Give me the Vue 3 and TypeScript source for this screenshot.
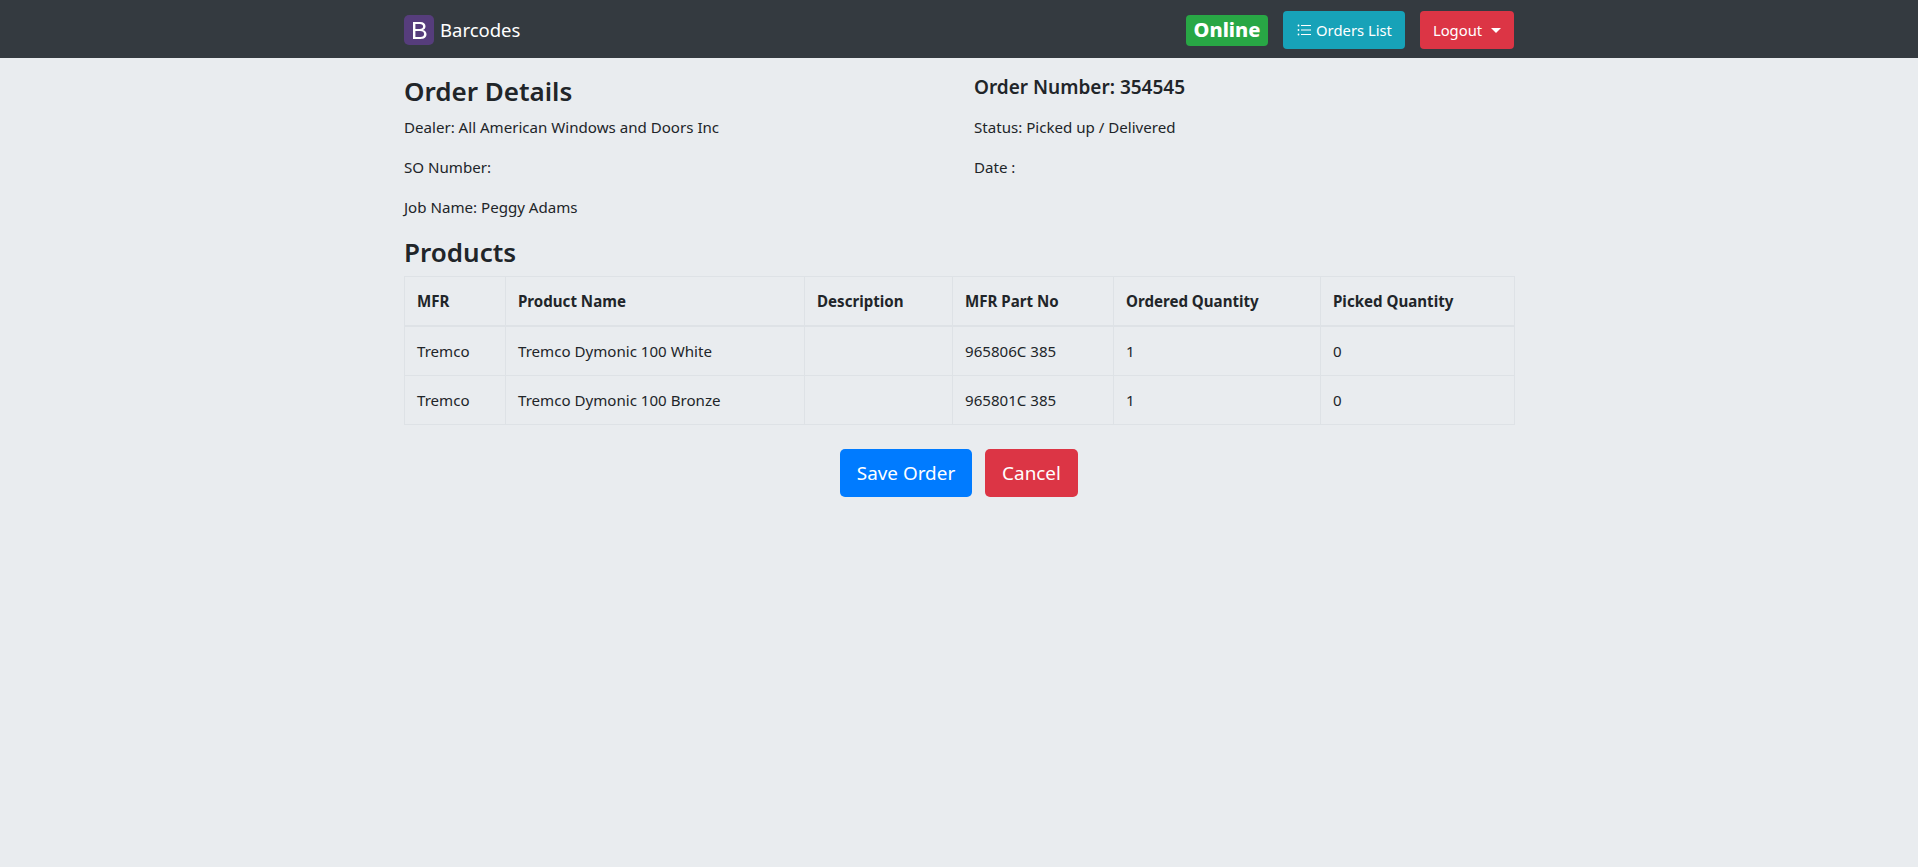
<script setup lang="ts">
interface Row { mfr: string; name: string; desc: string; part: string; ordered: number; picked: number }
const columns = [
  { title: 'MFR', width: 101 },
  { title: 'Product Name', width: 299 },
  { title: 'Description', width: 148 },
  { title: 'MFR Part No', width: 161 },
  { title: 'Ordered Quantity', width: 207 },
  { title: 'Picked Quantity', width: 194 }
]
const rows: Row[] = [
  { mfr: 'Tremco', name: 'Tremco Dymonic 100 White', desc: '', part: '965806C 385', ordered: 1, picked: 0 },
  { mfr: 'Tremco', name: 'Tremco Dymonic 100 Bronze', desc: '', part: '965801C 385', ordered: 1, picked: 0 }
]
</script>

<template>
  <div class="page">
    <nav class="navbar">
      <div class="container nav-inner">
        <a class="brand">
          <svg class="logo" width="30" height="30" viewBox="0 0 30 30">
            <rect width="30" height="30" rx="5" fill="#563d7c" />
            <path fill="#fff" fill-rule="evenodd" d="M9 7h7.2c3.4 0 5.3 1.7 5.3 4.3 0 1.9-1 3.2-2.7 3.8 2.3.4 3.7 2.1 3.7 4.2 0 2.9-2.2 4.7-5.8 4.7H9zM11.4 9.1v4.9h4.3c2.3 0 3.4-.9 3.4-2.5 0-1.5-1.1-2.4-3.2-2.4zm0 7v5.8h4.9c2.5 0 3.8-1 3.8-2.9s-1.4-2.9-4.1-2.9z" />
          </svg>
          <span>Barcodes</span>
        </a>
        <div class="nav-actions">
          <span class="badge">Online</span>
          <a class="btn btn-info">
            <svg width="16" height="16" viewBox="0 0 16 16" fill="#fff">
              <rect x="5" y="3" width="10" height="1" />
              <rect x="5" y="7.5" width="10" height="1" />
              <rect x="5" y="12" width="10" height="1" />
              <circle cx="2.5" cy="3.5" r="0.9" />
              <circle cx="2.5" cy="8" r="0.9" />
              <circle cx="2.5" cy="12.5" r="0.9" />
            </svg>
            Orders List
          </a>
          <a class="btn btn-danger">Logout<i class="caret"></i></a>
        </div>
      </div>
    </nav>

    <main class="container">
      <section class="details">
        <div class="col">
          <h4>Order Details</h4>
          <p>Dealer: All American Windows and Doors Inc</p>
          <p>SO Number:</p>
          <p>Job Name: Peggy Adams</p>
        </div>
        <div class="col">
          <h5>Order Number: 354545</h5>
          <p>Status: Picked up / Delivered</p>
          <p>Date :</p>
        </div>
      </section>

      <h4 class="products-title">Products</h4>
      <table class="table">
        <colgroup>
          <col v-for="c in columns" :key="c.title" :style="{ width: c.width + 'px' }" />
        </colgroup>
        <thead>
          <tr><th v-for="c in columns" :key="c.title">{{ c.title }}</th></tr>
        </thead>
        <tbody>
          <tr v-for="r in rows" :key="r.part">
            <td>{{ r.mfr }}</td>
            <td>{{ r.name }}</td>
            <td>{{ r.desc }}</td>
            <td>{{ r.part }}</td>
            <td>{{ r.ordered }}</td>
            <td>{{ r.picked }}</td>
          </tr>
        </tbody>
      </table>

      <div class="actions">
        <a class="btn btn-lg btn-primary save">Save Order</a>
        <a class="btn btn-lg btn-danger cancel">Cancel</a>
      </div>
    </main>
  </div>
</template>

<style>
html, body { margin: 0; background: #e9ecef; }
</style>

<style scoped>
.page {
  min-height: 867px;
  background: #e9ecef;
  color: #212529;
  font-family: "Noto Sans", "Open Sans", sans-serif;
  font-size: 15px;
  line-height: 24px;
}
.container {
  box-sizing: border-box;
  width: 1140px;
  margin: 0 auto;
  padding: 0 15px;
}
.navbar {
  height: 58px;
  background: #343a40;
}
.nav-inner {
  height: 58px;
  padding-top: 2px;
  display: flex;
  align-items: center;
  justify-content: space-between;
}
.brand {
  display: flex;
  align-items: center;
  gap: 6px;
  color: #fff;
  font-size: 18.5px;
}
.logo { display: block; }
.nav-actions {
  display: flex;
  align-items: center;
  gap: 15px;
}
.badge {
  box-sizing: border-box;
  height: 31px;
  width: 82px;
  display: flex;
  align-items: center;
  justify-content: center;
  background: #28a745;
  color: #fff;
  border-radius: 4px;
  font-size: 20px;
  font-weight: 800;
}
.btn {
  box-sizing: border-box;
  display: inline-flex;
  align-items: center;
  justify-content: center;
  height: 38px;
  padding: 0 13px;
  border-radius: 4px;
  color: #fff;
  font-size: 14.8px;
  white-space: nowrap;
}
.btn svg { margin-right: 4px; }
.btn-info { background: #17a2b8; width: 122px; padding: 0; }
.btn-danger { background: #dc3545; }
.btn-primary { background: #007bff; }
.nav-actions .btn-danger { width: 94px; padding: 0; }
.caret {
  display: inline-block;
  margin-left: 9px;
  border-top: 5px solid #fff;
  border-left: 5px solid transparent;
  border-right: 5px solid transparent;
}
.details {
  display: grid;
  grid-template-columns: 570px 1fr;
  padding-top: 19px;
}
h4, h5, p { margin: 0; }
h4 {
  font-size: 26px;
  font-weight: 600;
  line-height: 29px;
  margin-bottom: 9px;
}
h5 {
  font-size: 19px;
  font-weight: 600;
  line-height: 24px;
  margin-top: -2px;
  margin-bottom: 16px;
}
p {
  margin-bottom: 16px;
  font-size: 15.1px;
}
.products-title { margin-top: 3px; }
.table {
  width: 1110px;
  table-layout: fixed;
  border-collapse: collapse;
  font-size: 15.1px;
}
.table th, .table td {
  box-sizing: border-box;
  border: 1px solid #dee2e6;
  padding: 12px;
  text-align: left;
  vertical-align: middle;
  height: 49px;
}
.table th {
  font-weight: 700;
  border-bottom-width: 2px;
}
.actions {
  display: flex;
  justify-content: center;
  gap: 13px;
  margin-top: 24px;
}
.btn-lg {
  height: 48px;
  padding: 0;
  font-size: 18.9px;
  border-radius: 5px;
}
.save { width: 132px; }
.cancel { width: 93px; }
</style>
